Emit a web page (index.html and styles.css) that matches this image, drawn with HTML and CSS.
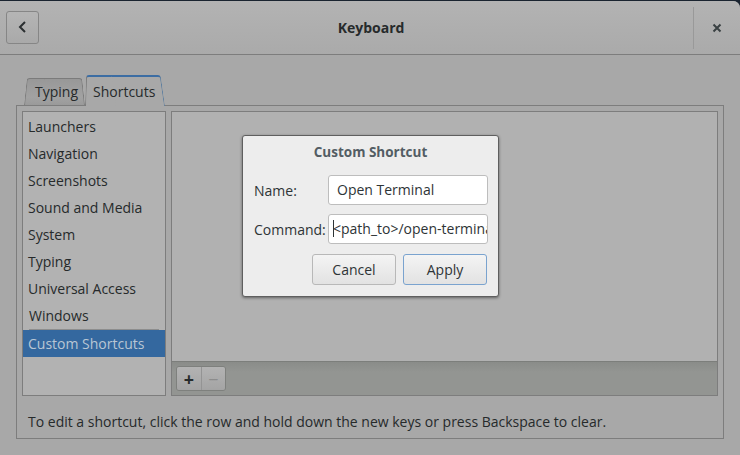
FILE: index.html
```html
<!DOCTYPE html>
<html>
<head>
<meta charset="utf-8">
<link rel="stylesheet" href="styles.css">
</head>
<body>
<div class="window">
  <header class="headerbar">
    <button class="back-btn" aria-label="Back">
      <svg width="12" height="14" viewBox="0 0 12 14"><path d="M8 2 L3 7 L8 12" fill="none" stroke="#2b2f31" stroke-width="2"/></svg>
    </button>
    <div class="title">Keyboard</div>
    <div class="sep"></div>
    <button class="close-btn" aria-label="Close">
      <svg width="10" height="10" viewBox="0 0 10 10"><path d="M1.5 1.5 L8.5 8.5 M8.5 1.5 L1.5 8.5" stroke="#3a4143" stroke-width="2"/></svg>
    </button>
  </header>
  <main class="content">
    <div class="tabs">
      <div class="tab typing"><span class="tab-label">Typing</span></div>
      <div class="tab active"><span class="tab-label">Shortcuts</span></div>
    </div>
    <section class="notebook">
      <div class="panes">
        <ul class="sections">
          <li>Launchers</li>
          <li>Navigation</li>
          <li>Screenshots</li>
          <li>Sound and Media</li>
          <li>System</li>
          <li>Typing</li>
          <li>Universal Access</li>
          <li class="last">Windows</li>
          <li class="selected">Custom Shortcuts</li>
        </ul>
        <div class="shortcuts">
          <div class="shortcut-list"></div>
          <div class="toolbar">
            <div class="linked">
              <button class="tb-btn plus">+</button>
              <button class="tb-btn minus">−</button>
            </div>
          </div>
        </div>
      </div>
      <p class="hint">To edit a shortcut, click the row and hold down the new keys or press Backspace to clear.</p>
    </section>
  </main>
</div>

<div class="dialog">
  <div class="dlg-title">Custom Shortcut</div>
  <div class="dlg-grid">
    <label class="dlg-label">Name:</label>
    <div class="entry">Open Terminal</div>
    <label class="dlg-label">Command:</label>
    <div class="entry cmd"><span class="caret"></span>&lt;path_to&gt;/open-terminal.sh</div>
  </div>
  <div class="dlg-actions">
    <button class="btn">Cancel</button>
    <button class="btn default">Apply</button>
  </div>
</div>
</body>
</html>
```
FILE: styles.css
```css
* { box-sizing: border-box; }
html, body { margin: 0; padding: 0; }
body {
  width: 740px;
  height: 455px;
  overflow: hidden;
  background: #1a2430;
  font-family: "Open Sans", "Noto Sans", sans-serif;
  font-size: 14px;
  color: #272b2c;
  position: relative;
}
button { font-family: inherit; }

.window {
  margin-top: 1px;
  height: 454px;
  background: #a8a8a8;
  border-top-right-radius: 7px;
  display: flex;
  flex-direction: column;
  overflow: hidden;
}

.headerbar {
  height: 54px;
  flex: none;
  display: flex;
  align-items: center;
  padding: 0 6px;
  background: linear-gradient(#b3b3b3, #aaaaaa);
  border-bottom: 1px solid #7d7d7d;
}
.back-btn {
  width: 33px;
  height: 33px;
  margin-top: -1px;
  border: 1px solid #868686;
  border-radius: 3px;
  background: linear-gradient(#b5b5b5, #a9a9a9);
  display: flex;
  align-items: center;
  justify-content: center;
  padding: 0;
}
.title {
  flex: 1;
  text-align: center;
  font-weight: bold;
  font-size: 14px;
  color: #262a2b;
  padding-left: 10px;
  margin-top: -1px;
}
.sep {
  width: 1px;
  height: 42px;
  background: #999;
  margin-top: 1px;
}
.close-btn {
  width: 46px;
  height: 40px;
  border: none;
  background: none;
  display: flex;
  align-items: center;
  justify-content: center;
  padding: 0;
  margin-right: -6px;
}

.content {
  flex: 1;
  padding: 20px 16px 16px 16px;
  display: flex;
  flex-direction: column;
}

.tabs {
  display: flex;
  align-items: flex-end;
  height: 31px;
  padding-left: 8px;
  position: relative;
  z-index: 1;
  margin-bottom: -1px;
}
.tab {
  position: relative;
  height: 27px;
  line-height: 27px;
  margin-bottom: 1px;
  color: #262a2b;
  font-size: 14px;
  isolation: isolate;
}
.tab::before,
.tab::after {
  content: "";
  position: absolute;
  top: 0;
  bottom: 0;
  width: 60%;
  z-index: -1;
  border-top: 1px solid #7b7b7b;
  background: linear-gradient(#989898, #a2a2a2 70%, #9a9a9a);
}
.tab::before {
  left: 0;
  border-left: 1px solid #7b7b7b;
  border-top-left-radius: 3px;
  transform-origin: bottom left;
  transform: skewX(-6deg);
}
.tab::after {
  right: 0;
  border-right: 1px solid #7b7b7b;
  border-top-right-radius: 3px;
  transform-origin: bottom right;
  transform: skewX(6deg);
}
.tab.typing {
  padding: 0 7px 0 11px;
}
.tab.active {
  height: 31px;
  margin-bottom: 0;
  padding: 3px 10px 0 8px;
  z-index: 2;
}
.tab.active::before,
.tab.active::after {
  background: #a8a8a8;
  border-top-color: #3c6da3;
  border-top-width: 2px;
}
.tab.active::before { transform: skewX(-2deg); }
.tab.active::after { transform: skewX(8deg); border-right-color: #5d7e9f; }

.notebook {
  flex: 1;
  border: 1px solid #7d7d7d;
  padding: 5px 5px 0 5px;
  display: flex;
  flex-direction: column;
}
.panes {
  display: flex;
  gap: 5px;
  height: 285px;
}
.sections {
  width: 144px;
  margin: 0;
  padding: 0;
  list-style: none;
  background: #b2b2b2;
  border: 1px solid #7d7d7d;
}
.sections li {
  height: 27px;
  line-height: 27px;
  padding-left: 5px;
  color: #262a2b;
}
.sections li:first-child { margin-top: 1px; }
.sections li.last {
  border-bottom: 1px solid #8d8d8d;
  margin-left: 6px;
  margin-right: 6px;
  padding-left: 0;
  height: 28px;
}
.sections li.selected {
  background: #34689f;
  color: #b9c6d4;
}

.shortcuts {
  flex: 1;
  border: 1px solid #7d7d7d;
  display: flex;
  flex-direction: column;
}
.shortcut-list {
  flex: 1;
  background: #b1b1b1;
}
.toolbar {
  height: 34px;
  background: linear-gradient(#8a8c89, #939592 30%, #939592);
  border-top: 1px solid #7c7e7b;
  padding: 4px 4px;
  display: flex;
  align-items: center;
}
.linked {
  display: flex;
  border: 1px solid #7e807d;
  border-radius: 3px;
  overflow: hidden;
  height: 25px;
}
.tb-btn {
  width: 24px;
  height: 100%;
  border: none;
  padding: 0;
  background: linear-gradient(#b3b3b3, #a4a4a4);
  font-size: 18px;
  line-height: 22px;
  font-weight: bold;
  color: #272b2c;
}
.tb-btn.minus {
  border-left: 1px solid #949494;
  color: #8c8c8c;
  font-weight: normal;
}

.hint {
  margin: 16px 0 0 6px;
  font-size: 14px;
  color: #262a2b;
}

.dialog {
  position: absolute;
  left: 242px;
  top: 135px;
  width: 257px;
  height: 162px;
  background: #ededed;
  border: 1px solid #5f5f5f;
  border-radius: 3px;
  box-shadow: 0 1px 3px rgba(0,0,0,0.45);
  padding: 0 11px 0 11px;
  display: flex;
  flex-direction: column;
}
.dlg-title {
  text-align: center;
  font-weight: bold;
  font-size: 13.5px;
  color: #535d64;
  height: 32px;
  line-height: 32px;
}
.dlg-grid {
  display: grid;
  grid-template-columns: 74px 160px;
  row-gap: 9px;
  margin-top: 7px;
  align-items: center;
}
.dlg-label {
  color: #2e3436;
  font-size: 14px;
}
.entry {
  height: 30px;
  background: #ffffff;
  border: 1px solid #bdbdbd;
  border-radius: 3px;
  padding: 0 8px;
  line-height: 28px;
  white-space: nowrap;
  overflow: hidden;
  color: #2e3436;
  font-size: 14px;
}
.entry.cmd { padding-left: 4px; }
.caret {
  display: inline-block;
  width: 1px;
  height: 17px;
  background: #2e3436;
  vertical-align: -3px;
  margin-right: -1px;
}
.dlg-actions {
  display: flex;
  justify-content: flex-end;
  gap: 7px;
  margin-top: 10px;
}
.btn {
  width: 84px;
  height: 31px;
  border: 1px solid #b8b8b8;
  border-radius: 3px;
  background: linear-gradient(#f4f4f4, #e2e2e2);
  color: #2e3436;
  font-size: 14px;
  padding: 0;
}
.btn.default { border-color: #7aa3cf; }
```
